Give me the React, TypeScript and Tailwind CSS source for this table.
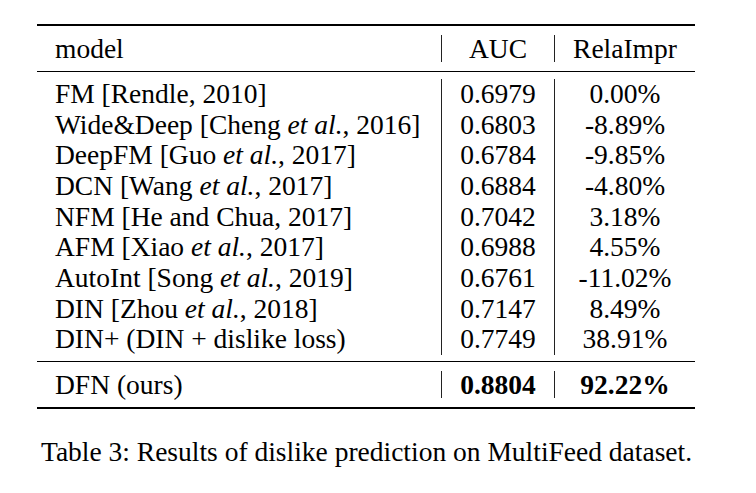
const rows: { model: React.ReactNode; auc: string; impr: string }[] = [
  { model: <>FM [Rendle, 2010]</>, auc: "0.6979", impr: "0.00%" },
  { model: <>Wide&amp;Deep [Cheng <i>et al.</i>, 2016]</>, auc: "0.6803", impr: "-8.89%" },
  { model: <>DeepFM [Guo <i>et al.</i>, 2017]</>, auc: "0.6784", impr: "-9.85%" },
  { model: <>DCN [Wang <i>et al.</i>, 2017]</>, auc: "0.6884", impr: "-4.80%" },
  { model: <>NFM [He and Chua, 2017]</>, auc: "0.7042", impr: "3.18%" },
  { model: <>AFM [Xiao <i>et al.</i>, 2017]</>, auc: "0.6988", impr: "4.55%" },
  { model: <>AutoInt [Song <i>et al.</i>, 2019]</>, auc: "0.6761", impr: "-11.02%" },
  { model: <>DIN [Zhou <i>et al.</i>, 2018]</>, auc: "0.7147", impr: "8.49%" },
  { model: <>DIN+ (DIN + dislike loss)</>, auc: "0.7749", impr: "38.91%" },
];

const cols = "grid grid-cols-[404px_113px_141px]";

export default function App() {
  return (
    <div
      className="w-[756px] h-[493px] bg-white text-black text-[27.5px] overflow-hidden"
      style={{ fontFamily: '"Liberation Serif", "Times New Roman", serif' }}
    >
      <div className="ml-[37px] pt-[24px] w-[658px]">
        {/* header */}
        <div className="border-t-2 border-b border-black">
          <div className={`${cols} h-[45px] py-[9px] leading-[27px]`}>
            <div className="pl-[18px]">model</div>
            <div className="border-l border-[#222] text-center">AUC</div>
            <div className="border-l border-[#222] text-center">RelaImpr</div>
          </div>
        </div>

        {/* body */}
        <div className="border-b border-black pt-[7px] pb-[6px]">
          <div className={cols}>
            <div className="pl-[18px]">
              {rows.map((r, i) => (
                <div key={i} className="h-[30.67px] leading-[30.67px] whitespace-nowrap">
                  {r.model}
                </div>
              ))}
            </div>
            <div className="border-l border-[#222] text-center">
              {rows.map((r, i) => (
                <div key={i} className="h-[30.67px] leading-[30.67px]">
                  {r.auc}
                </div>
              ))}
            </div>
            <div className="border-l border-[#222] text-center">
              {rows.map((r, i) => (
                <div key={i} className="h-[30.67px] leading-[30.67px]">
                  {r.impr}
                </div>
              ))}
            </div>
          </div>
        </div>

        {/* ours */}
        <div className="border-b-2 border-black">
          <div className={`${cols} h-[45px] py-[9px] leading-[27px]`}>
            <div className="pl-[18px]">DFN (ours)</div>
            <div className="border-l border-[#222] text-center font-bold">0.8804</div>
            <div className="border-l border-[#222] text-center font-bold">92.22%</div>
          </div>
        </div>
      </div>

      <p className="mt-[28px] ml-[41px] leading-[30px] whitespace-nowrap">
        Table 3: Results of dislike prediction on MultiFeed dataset.
      </p>
    </div>
  );
}
